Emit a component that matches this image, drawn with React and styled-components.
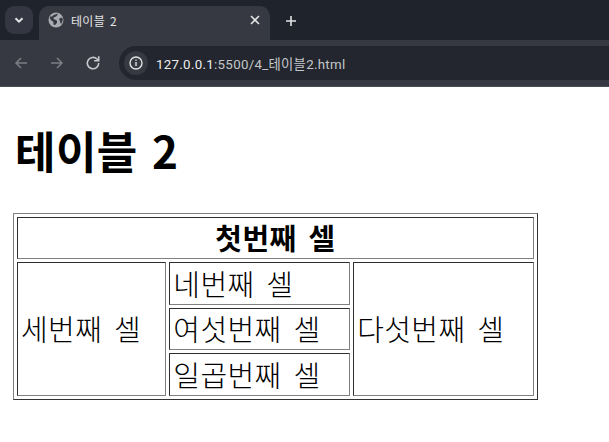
import React from 'react';
import styled, { createGlobalStyle } from 'styled-components';

const Global = createGlobalStyle`
  html, body { margin: 0; padding: 0; background: #fff; overflow: hidden; }
  body { font-family: "Noto Sans CJK KR", "Noto Sans", sans-serif; color: #000; }
`;
const Chrome = styled.header`
  background: #1f232c;
  height: 87px;
  display: flex;
  flex-direction: column;
`;
const TabStrip = styled.div`
  height: 40px;
  display: flex;
  align-items: flex-end;
  padding-left: 5px;
  gap: 6px;
`;
const TabSearch = styled.div`
  width: 28px;
  height: 28px;
  margin-bottom: 6px;
  border-radius: 9px;
  background: #343741;
  color: #e3e3e3;
  display: flex;
  align-items: center;
  justify-content: center;
`;
const Tab = styled.div`
  width: 231px;
  height: 34px;
  background: #363942;
  border-radius: 10px 10px 0 0;
  display: flex;
  align-items: center;
  padding: 0 10px 6px 9px;
  box-sizing: border-box;
  gap: 7px;
  color: #e3e3e3;
  font-size: 12px;
  word-spacing: 2px;
  letter-spacing: 0.3px;
  font-family: "Noto Sans CJK KR", sans-serif;
`;
const TabTitle = styled.span`
  flex: 1;
`;
const PlusButton = styled.div`
  width: 28px;
  height: 28px;
  margin: 0 0 5px 1px;
  color: #e3e3e3;
  display: flex;
  align-items: center;
  justify-content: center;
`;
const Toolbar = styled.div`
  height: 47px;
  background: #363942;
  border-bottom: 1px solid #4a4d55;
  box-sizing: border-box;
  display: flex;
  align-items: flex-start;
  padding: 6px 0 0 3px;
`;
const NavIcon = styled.div`
  width: 36px;
  height: 34px;
  color: ${p => (p.$on ? '#c7c9cc' : '#7c7e84')};
  display: flex;
  align-items: center;
  justify-content: center;
`;
const Omnibox = styled.div`
  flex: 1;
  height: 34px;
  margin-left: 8px;
  background: #23262e;
  border-radius: 17px 0 0 17px;
  display: flex;
  align-items: center;
  padding-left: 5px;
  gap: 8px;
`;
const InfoBadge = styled.div`
  width: 24px;
  height: 24px;
  border-radius: 50%;
  background: #363942;
  color: #e3e3e3;
  display: flex;
  align-items: center;
  justify-content: center;
`;
const Url = styled.span`
  font-size: 13.3px;
  letter-spacing: 0.3px;
  color: #c4c6ca;
  font-family: "Roboto", "Noto Sans CJK KR", sans-serif;
  b { font-weight: 400; color: #eceded; }
`;
const Page = styled.main`
  padding: 0 0 0 13px;
`;
const Heading = styled.h1`
  margin: 31px 0 31px 2px;
  font-size: 44px;
  line-height: 64px;
  font-weight: 700;
  word-spacing: 4px;
  letter-spacing: 0.4px;
`;
const Table = styled.table`
  width: 525px;
  border: 1px solid #808080;
  border-right-color: #333;
  border-bottom-color: #333;
  border-spacing: 3px;
  box-sizing: border-box;
  font-size: 29px;
  word-spacing: 5px;
  letter-spacing: 0.4px;
`;
const Cell = styled.td`
  box-sizing: border-box;
  height: ${p => (p.$h ? `${p.$h}px` : 'auto')};
  border: 1px solid #2e2e2e;
  border-right-color: #808080;
  border-bottom-color: #808080;
  padding: 0 3px 2px;
  line-height: 36px;
  font-weight: ${p => (p.$head ? 700 : 300)};
  text-align: ${p => (p.$head ? 'center' : 'left')};
`;

export default function App() {
  return (
    <>
      <Global />
      <Chrome>
        <TabStrip>
          <TabSearch>
            <svg width="12" height="12" viewBox="0 0 12 12" fill="none" stroke="currentColor" strokeWidth="2"><path d="M2.5 4.2 6 7.7l3.5-3.5" /></svg>
          </TabSearch>
          <Tab>
            <svg width="16" height="16" viewBox="0 0 16 16"><circle cx="8" cy="8" r="7.5" fill="#a9abb0" /><path d="M2 4.5c2 .5 3-.5 4-2 1 .5 2 0 3.5-1 1 1-1 2.500-1.500 3s-3 .5-2.500 2 3 1 3.500 2.500-1 3.500-2.500 4-.5-2.500-1.500-3.500-3.500-1.500-3-5.500z" fill="#363942" /><path d="M11 7c1-1 2.500-1.500 3.500-1 .5 2 0 4-1.500 6-1-1-.5-3-2-5z" fill="#363942" /></svg>
            <TabTitle>테이블 2</TabTitle>
            <svg width="10" height="10" viewBox="0 0 10 10" stroke="currentColor" strokeWidth="1.600"><path d="M1 1l8 8M9 1l-8 8" /></svg>
          </Tab>
          <PlusButton>
            <svg width="12" height="12" viewBox="0 0 12 12" stroke="currentColor" strokeWidth="1.600"><path d="M6 1v10M1 6h10" /></svg>
          </PlusButton>
        </TabStrip>
        <Toolbar>
          <NavIcon>
            <svg width="14" height="14" viewBox="0 0 14 14" fill="none" stroke="currentColor" strokeWidth="1.500"><path d="M13 7H2M7 2 2 7l5 5" /></svg>
          </NavIcon>
          <NavIcon>
            <svg width="14" height="14" viewBox="0 0 14 14" fill="none" stroke="currentColor" strokeWidth="1.500"><path d="M1 7h11M7 2l5 5-5 5" /></svg>
          </NavIcon>
          <NavIcon $on>
            <svg width="16" height="16" viewBox="0 0 14 14" fill="none" stroke="currentColor" strokeWidth="1.400"><path d="M12 7a5 5 0 1 1-1.500-3.500L12 5" /><path d="M12 1v4H8" /></svg>
          </NavIcon>
          <Omnibox>
            <InfoBadge>
              <svg width="14" height="14" viewBox="0 0 14 14" fill="none" stroke="currentColor" strokeWidth="1.400"><circle cx="7" cy="7" r="6" /><path d="M7 6v4M7 3.500v1.200" /></svg>
            </InfoBadge>
            <Url><b>127.0.0.1</b>:5500/4_테이블2.html</Url>
          </Omnibox>
        </Toolbar>
      </Chrome>
      <Page>
        <Heading>테이블 2</Heading>
        <Table>
          <tbody>
            <tr><Cell $head $h={42} colSpan={3}>첫번째 셀</Cell></tr>
            <tr>
              <Cell rowSpan={3}>세번째 셀</Cell>
              <Cell $h={43}>네번째 셀</Cell>
              <Cell rowSpan={3}>다섯번째 셀</Cell>
            </tr>
            <tr><Cell $h={42}>여섯번째 셀</Cell></tr>
            <tr><Cell $h={43}>일곱번째 셀</Cell></tr>
          </tbody>
        </Table>
      </Page>
    </>
  );
}
